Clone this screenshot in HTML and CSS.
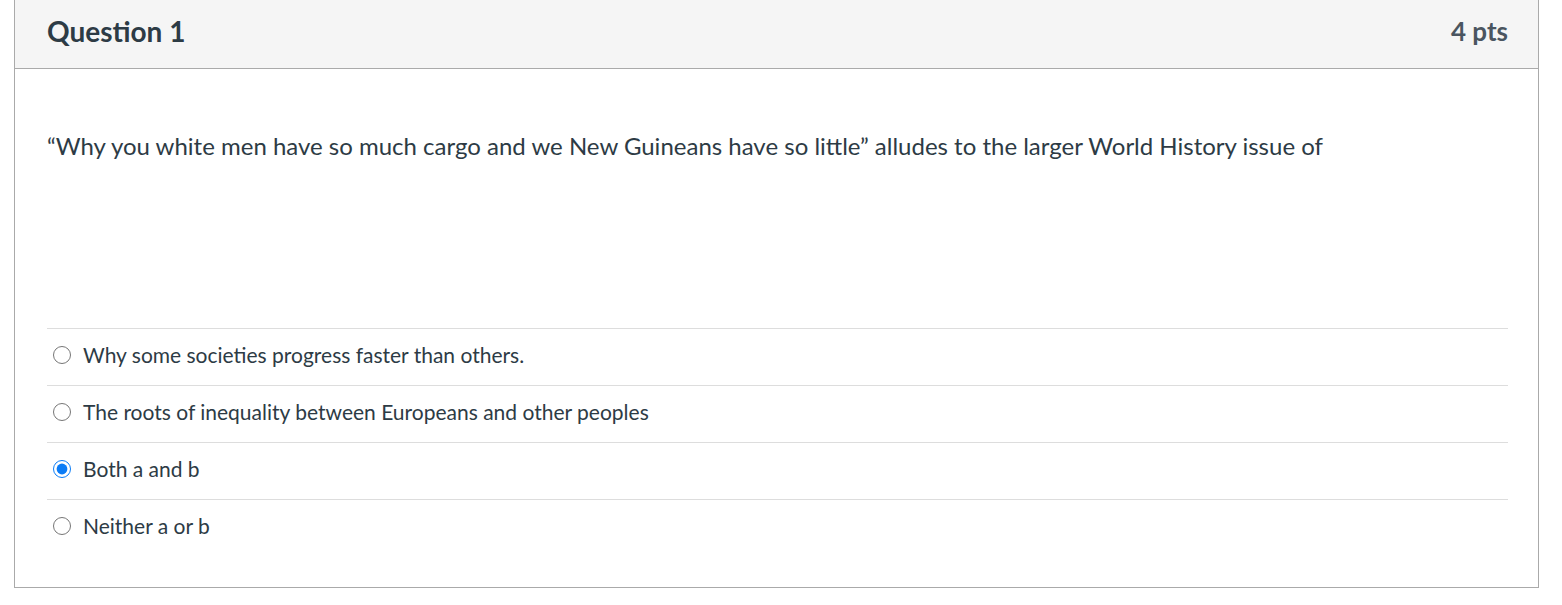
FILE: index.html
```html
<!DOCTYPE html>
<html lang="en">
<head>
    <meta charset="UTF-8">
    <title>Question 1</title>
    <link rel="stylesheet" href="styles.css">
</head>
<body>
    <div class="question">
        <div class="question-header">
            <h2 class="question-name">Question 1</h2>
            <span class="question-points">4 pts</span>
        </div>
        <div class="question-body">
            <div class="question-text">
                <p>“Why you white men have so much cargo and we New Guineans have so little” alludes to the larger World History issue of</p>
            </div>
            <div class="answers">
                <label class="answer">
                    <input type="radio" name="q1">
                    <span>Why some societies progress faster than others.</span>
                </label>
                <label class="answer">
                    <input type="radio" name="q1">
                    <span>The roots of inequality between Europeans and other peoples</span>
                </label>
                <label class="answer">
                    <input type="radio" name="q1" checked>
                    <span>Both a and b</span>
                </label>
                <label class="answer">
                    <input type="radio" name="q1">
                    <span>Neither a or b</span>
                </label>
            </div>
        </div>
    </div>
</body>
</html>
```

FILE: styles.css
```css
body {
    margin: 0;
    font-family: Lato, "Noto Sans", sans-serif;
    color: #2d3b45;
    background: #fff;
}
.question {
    margin: -1px 0 0 14px;
    width: 1525px;
    box-sizing: border-box;
    border: 1px solid #aaaaaa;
}
.question-header {
    display: flex;
    justify-content: space-between;
    align-items: center;
    height: 69px;
    box-sizing: border-box;
    padding: 0 30px 6px 32px;
    background-color: #f5f5f5;
    border-bottom: 1px solid #aaaaaa;
}
.question-name {
    margin: 0;
    font-size: 28px;
    font-weight: bold;
}
.question-points {
    font-size: 26px;
    font-weight: bold;
    color: #4a5560;
}
.question-body {
    padding: 0 30px 31px 32px;
}
.question-text {
    min-height: 259px;
}
.question-text p {
    margin: 0;
    padding-top: 60px;
    font-size: 24px;
    line-height: 34px;
}
.answer {
    display: flex;
    align-items: center;
    gap: 12px;
    height: 57px;
    box-sizing: border-box;
    padding: 0 0 5px 6px;
    border-top: 1px solid #dddddd;
    font-size: 21px;
}
.answer input {
    margin: 0;
    width: 18px;
    height: 18px;
    accent-color: #0b7cf6;
}
```
